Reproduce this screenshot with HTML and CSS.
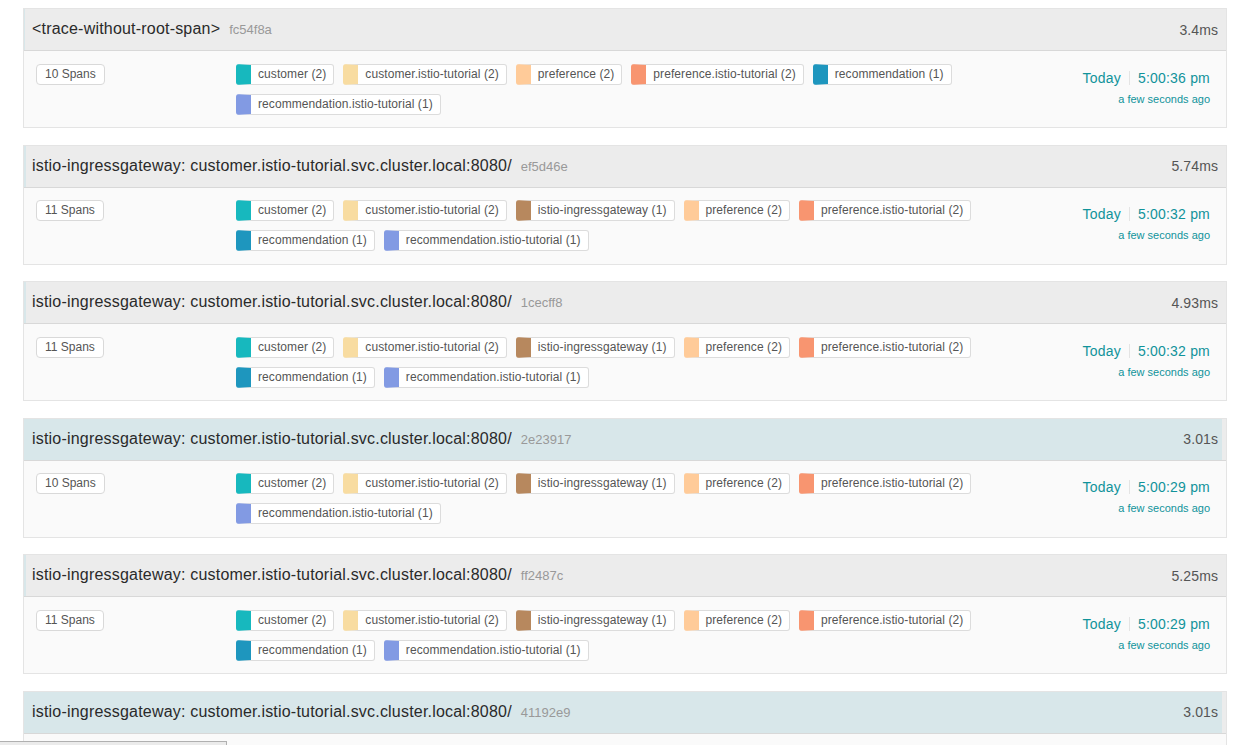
FILE: index.html
```html
<!DOCTYPE html>
<html lang="en">
<head>
<meta charset="utf-8">
<title>Traces</title>
<link rel="stylesheet" href="styles.css">
</head>
<body>
<div class="results">

  <div class="item">
    <div class="title">
      <div class="bar" style="width:0.113%"></div>
      <h3 class="name">&lt;trace-without-root-span&gt;<span class="tid">fc54f8a</span></h3>
      <span class="dur">3.4ms</span>
    </div>
    <div class="body">
      <div><span class="spans">10 Spans</span></div>
      <div class="tags">
        <span class="tag c1">customer (2)</span>
        <span class="tag c2">customer.istio-tutorial (2)</span>
        <span class="tag c4">preference (2)</span>
        <span class="tag c5">preference.istio-tutorial (2)</span>
        <span class="tag c8">recommendation (1)</span>
        <span class="tag c6">recommendation.istio-tutorial (1)</span>
      </div>
      <div class="time">
        <div class="when">Today<span class="sep"></span>5:00:36 pm</div>
        <div class="ago">a few seconds ago</div>
      </div>
    </div>
  </div>

  <div class="item">
    <div class="title">
      <div class="bar" style="width:0.19%"></div>
      <h3 class="name">istio-ingressgateway: customer.istio-tutorial.svc.cluster.local:8080/<span class="tid">ef5d46e</span></h3>
      <span class="dur">5.74ms</span>
    </div>
    <div class="body">
      <div><span class="spans">11 Spans</span></div>
      <div class="tags">
        <span class="tag c1">customer (2)</span>
        <span class="tag c2">customer.istio-tutorial (2)</span>
        <span class="tag c3">istio-ingressgateway (1)</span>
        <span class="tag c4">preference (2)</span>
        <span class="tag c5">preference.istio-tutorial (2)</span>
        <span class="tag c8">recommendation (1)</span>
        <span class="tag c6">recommendation.istio-tutorial (1)</span>
      </div>
      <div class="time">
        <div class="when">Today<span class="sep"></span>5:00:32 pm</div>
        <div class="ago">a few seconds ago</div>
      </div>
    </div>
  </div>

  <div class="item">
    <div class="title">
      <div class="bar" style="width:0.163%"></div>
      <h3 class="name">istio-ingressgateway: customer.istio-tutorial.svc.cluster.local:8080/<span class="tid">1cecff8</span></h3>
      <span class="dur">4.93ms</span>
    </div>
    <div class="body">
      <div><span class="spans">11 Spans</span></div>
      <div class="tags">
        <span class="tag c1">customer (2)</span>
        <span class="tag c2">customer.istio-tutorial (2)</span>
        <span class="tag c3">istio-ingressgateway (1)</span>
        <span class="tag c4">preference (2)</span>
        <span class="tag c5">preference.istio-tutorial (2)</span>
        <span class="tag c8">recommendation (1)</span>
        <span class="tag c6">recommendation.istio-tutorial (1)</span>
      </div>
      <div class="time">
        <div class="when">Today<span class="sep"></span>5:00:32 pm</div>
        <div class="ago">a few seconds ago</div>
      </div>
    </div>
  </div>

  <div class="item">
    <div class="title">
      <div class="bar" style="width:99.67%"></div>
      <h3 class="name">istio-ingressgateway: customer.istio-tutorial.svc.cluster.local:8080/<span class="tid">2e23917</span></h3>
      <span class="dur">3.01s</span>
    </div>
    <div class="body">
      <div><span class="spans">10 Spans</span></div>
      <div class="tags">
        <span class="tag c1">customer (2)</span>
        <span class="tag c2">customer.istio-tutorial (2)</span>
        <span class="tag c3">istio-ingressgateway (1)</span>
        <span class="tag c4">preference (2)</span>
        <span class="tag c5">preference.istio-tutorial (2)</span>
        <span class="tag c6">recommendation.istio-tutorial (1)</span>
      </div>
      <div class="time">
        <div class="when">Today<span class="sep"></span>5:00:29 pm</div>
        <div class="ago">a few seconds ago</div>
      </div>
    </div>
  </div>

  <div class="item">
    <div class="title">
      <div class="bar" style="width:0.174%"></div>
      <h3 class="name">istio-ingressgateway: customer.istio-tutorial.svc.cluster.local:8080/<span class="tid">ff2487c</span></h3>
      <span class="dur">5.25ms</span>
    </div>
    <div class="body">
      <div><span class="spans">11 Spans</span></div>
      <div class="tags">
        <span class="tag c1">customer (2)</span>
        <span class="tag c2">customer.istio-tutorial (2)</span>
        <span class="tag c3">istio-ingressgateway (1)</span>
        <span class="tag c4">preference (2)</span>
        <span class="tag c5">preference.istio-tutorial (2)</span>
        <span class="tag c8">recommendation (1)</span>
        <span class="tag c6">recommendation.istio-tutorial (1)</span>
      </div>
      <div class="time">
        <div class="when">Today<span class="sep"></span>5:00:29 pm</div>
        <div class="ago">a few seconds ago</div>
      </div>
    </div>
  </div>

  <div class="item">
    <div class="title">
      <div class="bar" style="width:99.67%"></div>
      <h3 class="name">istio-ingressgateway: customer.istio-tutorial.svc.cluster.local:8080/<span class="tid">41192e9</span></h3>
      <span class="dur">3.01s</span>
    </div>
    <div class="body">
      <div><span class="spans">10 Spans</span></div>
      <div class="tags">
        <span class="tag c1">customer (2)</span>
        <span class="tag c2">customer.istio-tutorial (2)</span>
        <span class="tag c3">istio-ingressgateway (1)</span>
        <span class="tag c4">preference (2)</span>
        <span class="tag c5">preference.istio-tutorial (2)</span>
        <span class="tag c6">recommendation.istio-tutorial (1)</span>
      </div>
      <div class="time">
        <div class="when">Today<span class="sep"></span>5:00:28 pm</div>
        <div class="ago">a few seconds ago</div>
      </div>
    </div>
  </div>

</div>
<div class="status"></div>
</body>
</html>
```

FILE: styles.css
```css
* { box-sizing: border-box; }

html, body { margin: 0; background: #fff; }

body {
  font-family: "Liberation Sans", Arial, Helvetica, sans-serif;
  color: #333;
  padding: 8px 9px 0 23px;
}

.results {
  display: flex;
  flex-direction: column;
  gap: 16.6px;
}

.item {
  border: 1px solid #e4e4e4;
  background: #fafafa;
}

.title {
  position: relative;
  display: flex;
  align-items: center;
  justify-content: space-between;
  background: #ececec;
  border-bottom: 1px solid #d8d8d8;
  padding: 8px;
  min-height: 40.6px;
}

.bar {
  position: absolute;
  left: 0;
  top: 0;
  bottom: 0;
  background: #d8e7ea;
}

.name {
  position: relative;
  margin: 0;
  font-size: 16px;
  font-weight: normal;
  line-height: 24px;
  letter-spacing: 0.2px;
  color: #2a2a2a;
}

.tid {
  font-size: 13px;
  color: #999;
  margin-left: 9px;
  letter-spacing: 0;
}

.dur {
  position: relative;
  font-size: 14px;
  color: #555;
  line-height: 24px;
  letter-spacing: 0.1px;
}

.body {
  display: grid;
  grid-template-columns: 200px 800px 1fr;
  padding: 12.5px 16px 12.5px 12px;
}

.spans {
  display: inline-block;
  height: 21px;
  line-height: 19px;
  padding: 0 8px;
  font-size: 12px;
  color: #555;
  background: #fff;
  border: 1px solid #d9d9d9;
  border-radius: 4px;
}

.tags {
  display: flex;
  flex-wrap: wrap;
  column-gap: 9px;
  row-gap: 9px;
}

.tag {
  display: inline-block;
  height: 21px;
  line-height: 19px;
  padding: 0 7px;
  font-size: 12px;
  letter-spacing: 0.08px;
  color: #555;
  background: #fff;
  border: 1px solid #dcdcdc;
  border-left-width: 15px;
  border-radius: 3px;
  white-space: nowrap;
}

.c1 { border-left-color: #17b8be; }
.c2 { border-left-color: #f8dca1; }
.c3 { border-left-color: #b7885e; }
.c4 { border-left-color: #ffcb99; }
.c5 { border-left-color: #f89570; }
.c6 { border-left-color: #829ae3; }
.c8 { border-left-color: #1e96be; }

.time {
  text-align: right;
  color: #11939a;
  padding-top: 4px;
}

.when {
  font-size: 14px;
  line-height: 21px;
  letter-spacing: 0.2px;
}

.sep {
  display: inline-block;
  width: 1px;
  height: 14px;
  background: #e4e4e4;
  margin: 0 8px;
  vertical-align: -2px;
}

.ago {
  font-size: 11px;
  line-height: 16px;
  margin-top: 2px;
}

.status {
  position: fixed;
  left: 0;
  top: 741px;
  width: 227px;
  height: 20px;
  background: #ebebeb;
  border-top: 1px solid #b0b0b0;
  border-right: 1px solid #b0b0b0;
}
```
